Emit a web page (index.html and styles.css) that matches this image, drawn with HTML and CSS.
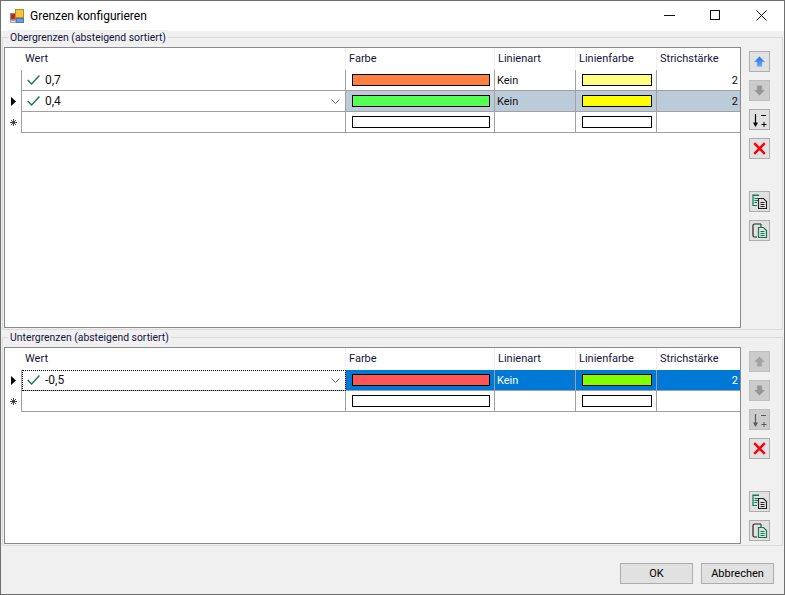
FILE: index.html
```html
<!DOCTYPE html>
<html lang="de">
<head>
<meta charset="utf-8">
<title>Grenzen konfigurieren</title>
<link rel="stylesheet" href="styles.css">
</head>
<body>
<svg class="defs" width="0" height="0">
  <defs>
    <linearGradient id="blue" x1="0" y1="0" x2="0" y2="1"><stop offset="0" stop-color="#1c6fe8"/><stop offset="1" stop-color="#6aa8f2"/></linearGradient>
    <symbol id="check" viewBox="0 0 13 10"><path d="M0.7 5 L4.6 9 L12.4 0.6" fill="none" stroke="#217a5e" stroke-width="1.5"/></symbol>
    <symbol id="chev" viewBox="0 0 9 5"><path d="M0.5 0.5 L4.5 4.5 L8.5 0.5" fill="none" stroke="#606060" stroke-width="1"/></symbol>
    <symbol id="marker" viewBox="0 0 5 9"><path d="M0 0 L5 4.5 L0 9 Z" fill="#000"/></symbol>
    <symbol id="star" viewBox="0 0 7 7"><path d="M3.5 0 V7 M0 3.5 H7 M1 1 L6 6 M6 1 L1 6" stroke="#333" stroke-width="0.9" fill="none"/></symbol>
    <symbol id="up" viewBox="0 0 11 11"><path d="M5.5 0.5 L10.5 5.5 V6 H8 V10.5 H3 V6 H0.5 V5.5 Z" fill="url(#blue)" stroke="#8fbcf5" stroke-width="0.6"/></symbol>
    <symbol id="up-off" viewBox="0 0 11 11"><path d="M5.5 0.5 L10.5 5.5 V6 H8 V10.5 H3 V6 H0.5 V5.5 Z" fill="#a3a3a3" stroke="#bcbcbc" stroke-width="0.6"/></symbol>
    <symbol id="down-off" viewBox="0 0 11 11"><path d="M5.5 10.5 L10.5 5.5 V5 H8 V0.5 H3 V5 H0.5 V5.5 Z" fill="#959595" stroke="#b6b6b6" stroke-width="0.6"/></symbol>
    <symbol id="sort" viewBox="0 0 16 15"><path d="M3.5 2 V12" stroke="currentColor" stroke-width="1.2" fill="none"/><path d="M1 10.5 H6 L3.5 15 Z" fill="currentColor"/><path d="M9 3.5 H14 M9.5 12.5 H14.5 M12 10 V15" stroke="currentColor" stroke-width="1" fill="none"/></symbol>
    <symbol id="cross" viewBox="0 0 13 13"><path d="M1.2 1.2 L11.8 11.8 M11.8 1.2 L1.2 11.8" stroke="#f5000c" stroke-width="2.4" fill="none"/></symbol>
    <symbol id="copy" viewBox="0 0 16 15">
      <path d="M1 .5 H7 V2 H1 Z" fill="#0c7a50"/>
      <path d="M1 .5 V11.5 H5" fill="none" stroke="#0c7a50" stroke-width="1.2"/>
      <path d="M2.5 4.5 H6 M2.5 6.5 H6 M2.5 8.5 H5" stroke="#0c7a50"/>
      <path d="M6.5 4.5 H11.5 L14.5 7.5 V14.5 H6.5 Z" fill="none" stroke="#222" stroke-width="1.1"/>
      <path d="M8.5 8.5 H12.5 M8.5 10.5 H12.5 M8.5 12.5 H12.5" stroke="#222"/>
    </symbol>
    <symbol id="paste" viewBox="0 0 16 15">
      <path d="M7 1 H2.5 Q1 1 1 2.5 V12.5 Q1 14 2.5 14 H5" fill="none" stroke="#222" stroke-width="1.2"/>
      <path d="M7 1 H9 V4" fill="none" stroke="#222"/>
      <path d="M6.5 4.5 H11.5 L14.5 7.5 V14.5 H6.5 Z" fill="none" stroke="#0c7a50" stroke-width="1.2"/>
      <path d="M8.5 8.5 H12.5 M8.5 10.5 H12.5 M8.5 12.5 H12.5" stroke="#0c7a50"/>
    </symbol>
  </defs>
</svg>

<div class="window">
  <header class="titlebar">
    <svg class="app-icon" width="15" height="15" viewBox="0 0 15 15">
      <rect x="0.5" y="4.5" width="5" height="6" fill="#c42a1e" stroke="#8c8c8c"/>
      <rect x="5.5" y="0.5" width="8" height="8" fill="#f6c33c" stroke="#b98a1c"/>
      <rect x="6.5" y="9.5" width="7" height="4" fill="#6b9be0" stroke="#4a76b8"/>
      <rect x="0.5" y="11.5" width="5" height="2" fill="#dddddd" stroke="#a8a8a8"/>
    </svg>
    <span class="title">Grenzen konfigurieren</span>
    <div class="caption">
      <svg class="cap-btn" width="11" height="11" viewBox="0 0 11 11"><path d="M0 5.5 H11" stroke="#111"/></svg>
      <svg class="cap-btn" width="11" height="11" viewBox="0 0 11 11"><rect x="0.5" y="0.5" width="9" height="9" fill="none" stroke="#111"/></svg>
      <svg class="cap-btn" width="11" height="11" viewBox="0 0 11 11"><path d="M0.5 0.5 L10.5 10.5 M10.5 0.5 L0.5 10.5" stroke="#111"/></svg>
    </div>
  </header>

  <section class="group group-top">
    <div class="legend">Obergrenzen (absteigend sortiert)</div>
    <div class="group-body">
      <div class="grid grid-tall">
        <div class="row head">
          <div class="rh"></div><div class="c">Wert</div><div class="c">Farbe</div><div class="c">Linienart</div><div class="c">Linienfarbe</div><div class="c">Strichstärke</div>
        </div>
        <div class="row">
          <div class="rh"></div>
          <div class="c val"><svg class="chk"><use href="#check"/></svg>0,7</div>
          <div class="c sw"><span class="swatch orange"></span></div>
          <div class="c tight">Kein</div>
          <div class="c sw"><span class="swatch lightyellow"></span></div>
          <div class="c num">2</div>
        </div>
        <div class="row sel-grey">
          <div class="rh"><svg class="mark"><use href="#marker"/></svg></div>
          <div class="c val edit"><svg class="chk"><use href="#check"/></svg>0,4<svg class="chev"><use href="#chev"/></svg></div>
          <div class="c sw"><span class="swatch green"></span></div>
          <div class="c tight">Kein</div>
          <div class="c sw"><span class="swatch yellow"></span></div>
          <div class="c num">2</div>
        </div>
        <div class="row">
          <div class="rh"><svg class="ast"><use href="#star"/></svg></div>
          <div class="c val"></div>
          <div class="c sw"><span class="swatch"></span></div>
          <div class="c tight"></div>
          <div class="c sw"><span class="swatch"></span></div>
          <div class="c num"></div>
        </div>
      </div>
      <div class="side">
        <button class="tb"><svg class="i11"><use href="#up"/></svg></button>
        <button class="tb off"><svg class="i11"><use href="#down-off"/></svg></button>
        <button class="tb dark"><svg class="i16"><use href="#sort"/></svg></button>
        <button class="tb"><svg class="i13"><use href="#cross"/></svg></button>
        <button class="tb spaced"><svg class="i16"><use href="#copy"/></svg></button>
        <button class="tb"><svg class="i16"><use href="#paste"/></svg></button>
      </div>
    </div>
  </section>

  <section class="group group-bottom">
    <div class="legend">Untergrenzen (absteigend sortiert)</div>
    <div class="group-body">
      <div class="grid grid-short">
        <div class="row head">
          <div class="rh"></div><div class="c">Wert</div><div class="c">Farbe</div><div class="c">Linienart</div><div class="c">Linienfarbe</div><div class="c">Strichstärke</div>
        </div>
        <div class="row sel-blue">
          <div class="rh"><svg class="mark"><use href="#marker"/></svg></div>
          <div class="c val edit focus"><svg class="chk"><use href="#check"/></svg>-0,5<svg class="chev"><use href="#chev"/></svg></div>
          <div class="c sw"><span class="swatch red"></span></div>
          <div class="c tight">Kein</div>
          <div class="c sw"><span class="swatch lime"></span></div>
          <div class="c num">2</div>
        </div>
        <div class="row">
          <div class="rh"><svg class="ast"><use href="#star"/></svg></div>
          <div class="c val"></div>
          <div class="c sw"><span class="swatch"></span></div>
          <div class="c tight"></div>
          <div class="c sw"><span class="swatch"></span></div>
          <div class="c num"></div>
        </div>
      </div>
      <div class="side">
        <button class="tb off"><svg class="i11"><use href="#up-off"/></svg></button>
        <button class="tb off"><svg class="i11"><use href="#down-off"/></svg></button>
        <button class="tb off grey"><svg class="i16"><use href="#sort"/></svg></button>
        <button class="tb"><svg class="i13"><use href="#cross"/></svg></button>
        <button class="tb spaced"><svg class="i16"><use href="#copy"/></svg></button>
        <button class="tb"><svg class="i16"><use href="#paste"/></svg></button>
      </div>
    </div>
  </section>

  <footer class="footer">
    <button class="btn">OK</button>
    <button class="btn">Abbrechen</button>
  </footer>
</div>
</body>
</html>
```

FILE: styles.css
```css
* { box-sizing: border-box; }
html, body { margin: 0; padding: 0; }
body {
  width: 785px;
  height: 595px;
  overflow: hidden;
  font-family: Roboto, "Noto Sans", sans-serif;
  font-size: 11px;
  color: #111;
}
.defs { position: absolute; }
.window {
  width: 785px;
  height: 595px;
  border: 1px solid #6f6f6f;
  background: #f0f0f0;
  display: flex;
  flex-direction: column;
}
.titlebar {
  height: 30px;
  background: #fff;
  display: flex;
  align-items: center;
  padding-left: 9px;
  flex: none;
}
.app-icon { flex: none; }
.title { margin-left: 5px; font-size: 12px; color: #000; }
.caption { margin-left: auto; display: flex; margin-right: 17px; padding-bottom: 2px; gap: 35px; }
.cap-btn { display: block; }

.group {
  flex: none;
  margin-left: 1px;
  width: 781px;
  border: 1px solid #dcdcdc;
  padding-left: 1px;
}
.group-top { margin-top: 6px; height: 293px; }
.group-bottom { margin-top: 7px; height: 209px; }
.legend {
  width: fit-content;
  height: 16px;
  font-size: 10.4px;
  line-height: 15px;
  margin: -8px 0 0 4px;
  padding: 0 2px;
  background: #f0f0f0;
  color: #14143c;
}
.group-body { display: flex; gap: 8px; margin-top: 1px; }

.grid {
  width: 737px;
  flex: none;
  background: #fff;
  border: 1px solid #8a8a8a;
}
.grid-tall { height: 281px; }
.grid-short { height: 197px; }

.row {
  display: grid;
  grid-template-columns: 17px 324px 149px 81px 81px 83px;
  height: 21px;
}
.row.head { height: 22px; }
.rh {
  background: #fff;
  border-right: 1px solid #a0a0a0;
  display: flex;
  align-items: center;
  padding-left: 5px;
}
.head .rh { border-right: 0; }
.c {
  border-right: 1px solid #a0a0a0;
  border-bottom: 1px solid #a0a0a0;
  display: flex;
  align-items: center;
  padding-left: 3px;
  white-space: nowrap;
  position: relative;
}
.c:last-child { border-right: 0; }
.head .c {
  border-bottom: 0;
  border-right: 1px solid #f0f0f0;
  color: #14143c;
  padding-bottom: 1px;
}
.head .c:last-child { border-right: 0; }
.tight { padding-left: 2px; }
.val { padding-left: 5px; background: #fff; font-size: 12px; }
.num { justify-content: flex-end; padding: 0 2px 0 0; }
.sw { padding-left: 6px; padding-right: 4px; }
.swatch {
  display: block;
  flex: 1;
  height: 12px;
  border: 1px solid #000;
  background: #fff;
}
.orange { background: #ff7f40; }
.lightyellow { background: #ffff80; }
.green { background: #55ff55; }
.yellow { background: #ffff00; }
.red { background: #ff5555; }
.lime { background: #80ff00; }

.sel-grey .c:not(.val) { background: #bccbda; }
.sel-blue .c:not(.val) { background: #0078d7; color: #fff; }
.focus { outline: 1px dotted #000; outline-offset: -1px; }

.chk { width: 13px; height: 10px; margin-right: 5px; flex: none; }
.chev { width: 9px; height: 5px; margin-left: auto; margin-right: 5px; flex: none; }
.mark { width: 5px; height: 9px; display: block; margin-left: 1px; }
.ast { width: 7px; height: 7px; display: block; }

.side { width: 21px; padding-top: 4px; display: flex; flex-direction: column; gap: 8px; flex: none; }
.tb {
  width: 21px;
  height: 21px;
  flex: none;
  padding: 0;
  margin: 0;
  border: 1px solid #adadad;
  background: #e1e1e1;
  display: flex;
  align-items: center;
  justify-content: center;
  color: #000;
}
.tb.off { background: #cccccc; border-color: #bfbfbf; }
.tb.grey { color: #5a5a5a; }
.tb.spaced { margin-top: 24px; }
.i11 { width: 11px; height: 11px; display: block; }
.i13 { width: 13px; height: 13px; display: block; }
.i16 { width: 16px; height: 15px; display: block; }

.footer {
  flex: none;
  display: flex;
  justify-content: flex-end;
  gap: 8px;
  padding: 17px 10px 0 0;
}
.btn {
  width: 73px;
  height: 21px;
  padding: 0;
  border: 1px solid #adadad;
  background: #e1e1e1;
  font: inherit;
  font-size: 11px;
  color: #000;
  line-height: 19px;
}
```
